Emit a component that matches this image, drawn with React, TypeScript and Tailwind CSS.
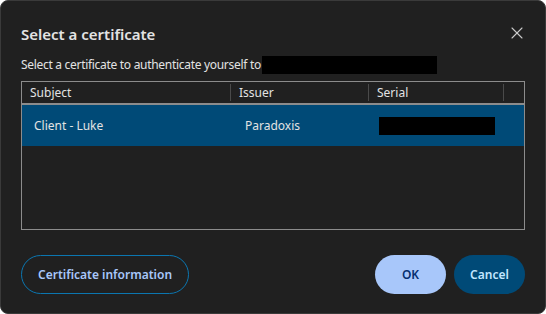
import { X } from 'lucide-react'

// Certificate picker dialog (dark theme)

const columns = [
  { label: 'Subject', width: 'w-[209px]' },
  { label: 'Issuer', width: 'w-[138px]' },
  { label: 'Serial', width: 'w-[135px]' },
]

export default function App() {
  return (
    <div
      className="w-[546px] h-[314px] bg-[#202020] border border-[#3a3a3a] rounded-[8px] text-[#e3e3e3] flex flex-col px-5 overflow-hidden"
      style={{ fontFamily: '"Noto Sans", "Open Sans", sans-serif' }}
    >
      {/* Header */}
      <div className="flex items-start justify-between pt-[22px]">
        <h1 className="text-[15px] font-semibold leading-[22px]">Select a certificate</h1>
        <button className="text-[#c8c8c8] -mr-[2px]">
          <X className="w-[20px] h-[20px]" strokeWidth={1.3} />
        </button>
      </div>

      <div className="flex items-center mt-[11px] text-[12px] tracking-[-0.3px] leading-[18px]">
        <span>Select a certificate to authenticate yourself to</span>
        <span className="ml-[1px] w-[175px] h-[18px] bg-black" />
      </div>

      {/* Table */}
      <div className="mt-[7px] h-[149px] border border-[#8c8c8c] flex flex-col">
        <div className="flex h-[23px] border-b-2 border-[#8c8c8c] text-[12px] items-center">
          {columns.map((c) => (
            <div key={c.label} className={`${c.width} h-full flex items-center justify-between`}>
              <span className="pl-2">{c.label}</span>
              <span className="w-px h-[17px] bg-[#4a4a4a]" />
            </div>
          ))}
        </div>
        <div className="flex h-[41px] bg-[#004a77] items-center text-[12px]">
          <div className="w-[209px] pl-3">Client - Luke</div>
          <div className="w-[138px] pl-[14px]">Paradoxis</div>
          <div className="pl-[10px]">
            <div className="w-[116px] h-[18px] bg-black" />
          </div>
        </div>
      </div>

      {/* Footer */}
      <div className="flex items-center justify-between mt-[25px]">
        <button className="h-[39px] px-4 rounded-full border border-[#0b76b0] text-[#a8c7fa] text-[12px] font-semibold">
          Certificate information
        </button>
        <div className="flex gap-2">
          <button className="h-[39px] w-[71px] rounded-full bg-[#a8c7fa] text-[#062e6f] text-[12px] font-semibold">
            OK
          </button>
          <button className="h-[39px] w-[71px] rounded-full bg-[#004a77] text-[#c2e7ff] text-[12px] font-semibold">
            Cancel
          </button>
        </div>
      </div>
    </div>
  )
}
